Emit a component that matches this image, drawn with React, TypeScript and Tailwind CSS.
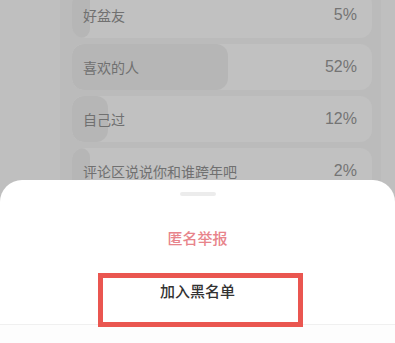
import React from "react";

const options = [
  { label: "好盆友", percent: 5 },
  { label: "喜欢的人", percent: 52 },
  { label: "自己过", percent: 12 },
  { label: "评论区说说你和谁跨年吧", percent: 2 },
];

const font = { fontFamily: '"PingFang SC", "Noto Sans CJK SC", "Noto Sans", sans-serif' };

export default function App() {
  return (
    <div className="relative h-[343px] w-[395px] overflow-hidden bg-[#bfbfbf]" style={font}>
      {/* dimmed poll underneath */}
      <div className="ml-[60px] mr-[14px] h-full bg-[#bbbbbb] pl-[12px] pr-[9px]">
        <div className="-mt-[8px] flex flex-col gap-[6px]">
          {options.map((opt) => (
            <div
              key={opt.label}
              className="relative flex h-[46px] items-center justify-between overflow-hidden rounded-[12px] bg-[#c1c1c1] pl-[11px] pr-[15px]"
            >
              <div
                className="absolute inset-y-0 left-0 rounded-[12px] bg-[#b6b6b6]"
                style={{ width: `max(${opt.percent}%, 18px)` }}
              />
              <span className="relative text-[14px] text-[#707070]">{opt.label}</span>
              <span
                className="relative text-[16px] font-medium text-[#747474]"
                style={{ fontFamily: '"Liberation Sans", Arial, sans-serif' }}
              >
                {opt.percent}%
              </span>
            </div>
          ))}
        </div>
      </div>

      {/* action sheet */}
      <div className="absolute inset-x-0 bottom-0 h-[163px] rounded-t-[22px] bg-white">
        <div className="mx-auto mt-[12px] h-[4px] w-[36px] rounded-full bg-[#ececec]" />
        <div className="mt-[15px] flex h-[54px] items-center justify-center text-[15px] font-medium text-[#e8848b]">
          匿名举报
        </div>
        <div className="h-[60px] border-b border-[#f0f0f0] pt-[16px] text-center text-[15px] font-medium leading-[20px] text-[#333333]">
          加入黑名单
        </div>
        <div className="h-full bg-[#fdfdfd]" />
      </div>

      {/* annotation highlight */}
      <div className="absolute left-[98px] top-[273px] h-[54px] w-[205px] border-[5px] border-[#ea5650]" />
    </div>
  );
}
